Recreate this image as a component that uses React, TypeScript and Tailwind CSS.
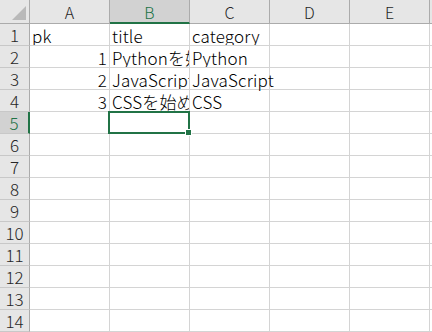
import React from "react";

const COLS = ["A", "B", "C", "D", "E"];
const ROWS = 14;

type Cell = { text: string; align?: "left" | "right"; spill?: boolean };

const DATA: Record<string, Cell> = {
  A1: { text: "pk" },
  B1: { text: "title" },
  C1: { text: "category" },
  A2: { text: "1", align: "right" },
  B2: { text: "Pythonを始めよう" },
  C2: { text: "Python" },
  A3: { text: "2", align: "right" },
  B3: { text: "JavaScriptを始めよう" },
  C3: { text: "JavaScript", spill: true },
  A4: { text: "3", align: "right" },
  B4: { text: "CSSを始めよう" },
  C4: { text: "CSS" },
};

const font = { fontFamily: '"Noto Sans CJK JP", "Noto Sans", sans-serif' };

function ColumnHeader() {
  return (
    <div className="flex h-[24px]">
      <div className="relative h-full w-[30px] shrink-0 border-r border-b border-[#ababab] bg-[#e6e6e6]">
        <svg className="absolute right-[3px] bottom-[3px]" width="14" height="14" viewBox="0 0 14 14">
          <path d="M14 0 L14 14 L0 14 Z" fill="#b9b9b9" />
        </svg>
      </div>
      {COLS.map((c) => {
        const sel = c === "B";
        return (
          <div
            key={c}
            className={
              sel
                ? "flex h-full w-[80px] shrink-0 items-center justify-center border-r border-[#ababab] border-b-2 border-b-[#217346] bg-[#d2d2d2] pt-[1px] text-[16px] font-light text-[#217346]"
                : "flex h-full w-[80px] shrink-0 items-center justify-center border-r border-b border-[#ababab] bg-[#e6e6e6] pt-[1px] text-[16px] font-light text-[#262626]"
            }
          >
            {c}
          </div>
        );
      })}
      <div className="h-full flex-1 border-b border-[#ababab] bg-[#e6e6e6]" />
    </div>
  );
}

function Row({ r }: { r: number }) {
  const selRow = r === 5;
  return (
    <div className="flex h-[22px]">
      <div
        className={
          selRow
            ? "flex h-full w-[30px] shrink-0 items-center justify-center border-r-2 border-r-[#217346] border-b border-b-[#c8c8c8] bg-[#d2d2d2] text-[17px] font-light text-[#217346]"
            : "flex h-full w-[30px] shrink-0 items-center justify-center border-r border-b border-r-[#ababab] border-b-[#c8c8c8] bg-[#e6e6e6] text-[17px] font-light text-[#262626]"
        }
      >
        {r}
      </div>
      {COLS.map((c) => {
        const cell = DATA[`${c}${r}`];
        const sel = selRow && c === "B";
        return (
          <div
            key={c}
            className="relative h-full w-[80px] shrink-0 border-r border-b border-[#d4d4d4] bg-white"
          >
            {cell && (
              <div
                className={
                  cell.spill
                    ? "absolute inset-y-0 left-0 z-10 w-[160px]"
                    : "absolute inset-y-0 left-0 w-[79px] overflow-hidden"
                }
              >
                <div
                  className={
                    cell.align === "right"
                      ? "absolute inset-y-0 right-[2px] flex items-center pt-[1px] whitespace-nowrap text-[17px] font-light leading-none tracking-[0.01em] text-black"
                      : "absolute inset-y-0 left-[2px] flex items-center pt-[1px] whitespace-nowrap text-[17px] font-light leading-none tracking-[0.01em] text-black"
                  }
                >
                  {cell.text}
                </div>
              </div>
            )}
            {sel && (
              <div className="absolute -top-[1px] -left-[2px] z-20 h-[23px] w-[82px] border-2 border-[#217346]">
                <div className="absolute -right-[4px] -bottom-[4px] h-[7px] w-[7px] border border-white bg-[#217346]" />
              </div>
            )}
          </div>
        );
      })}
      <div className="h-full flex-1 border-b border-[#d4d4d4] bg-white" />
    </div>
  );
}

export default function App() {
  return (
    <div className="h-[332px] w-[432px] overflow-hidden bg-white" style={font}>
      <ColumnHeader />
      {Array.from({ length: ROWS }, (_, i) => (
        <Row key={i} r={i + 1} />
      ))}
    </div>
  );
}
